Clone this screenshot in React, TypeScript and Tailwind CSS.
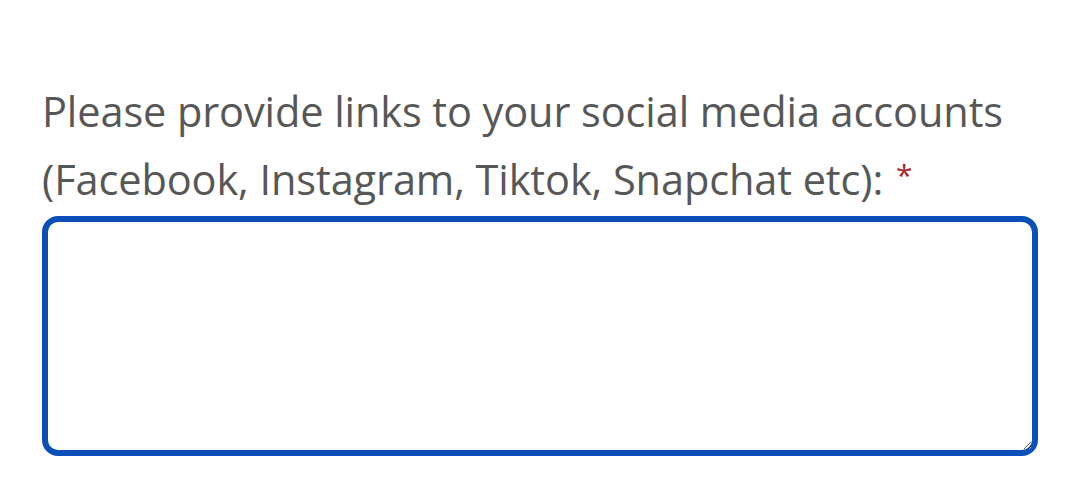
export default function App() {
  return (
    <div className="w-[1080px] h-[488px] bg-white pl-[42px] pr-[42px] pt-[80px]" style={{ fontFamily: '"Open Sans", sans-serif' }}>
      <label className="block text-[41.5px] leading-[63px] text-[#575757] tracking-[-0.1px]">
        Please provide links to your social media accounts (Facebook, Instagram, Tiktok, Snapchat etc): <span className="ml-[2px] text-[30px] text-[#a4262c] align-[9px]">*</span>
      </label>
      <textarea className="mt-[5px] block w-[996px] h-[240px] border-[6px] border-[#0b4fb8] rounded-[16px] outline-none resize-y" />
    </div>
  );
}
